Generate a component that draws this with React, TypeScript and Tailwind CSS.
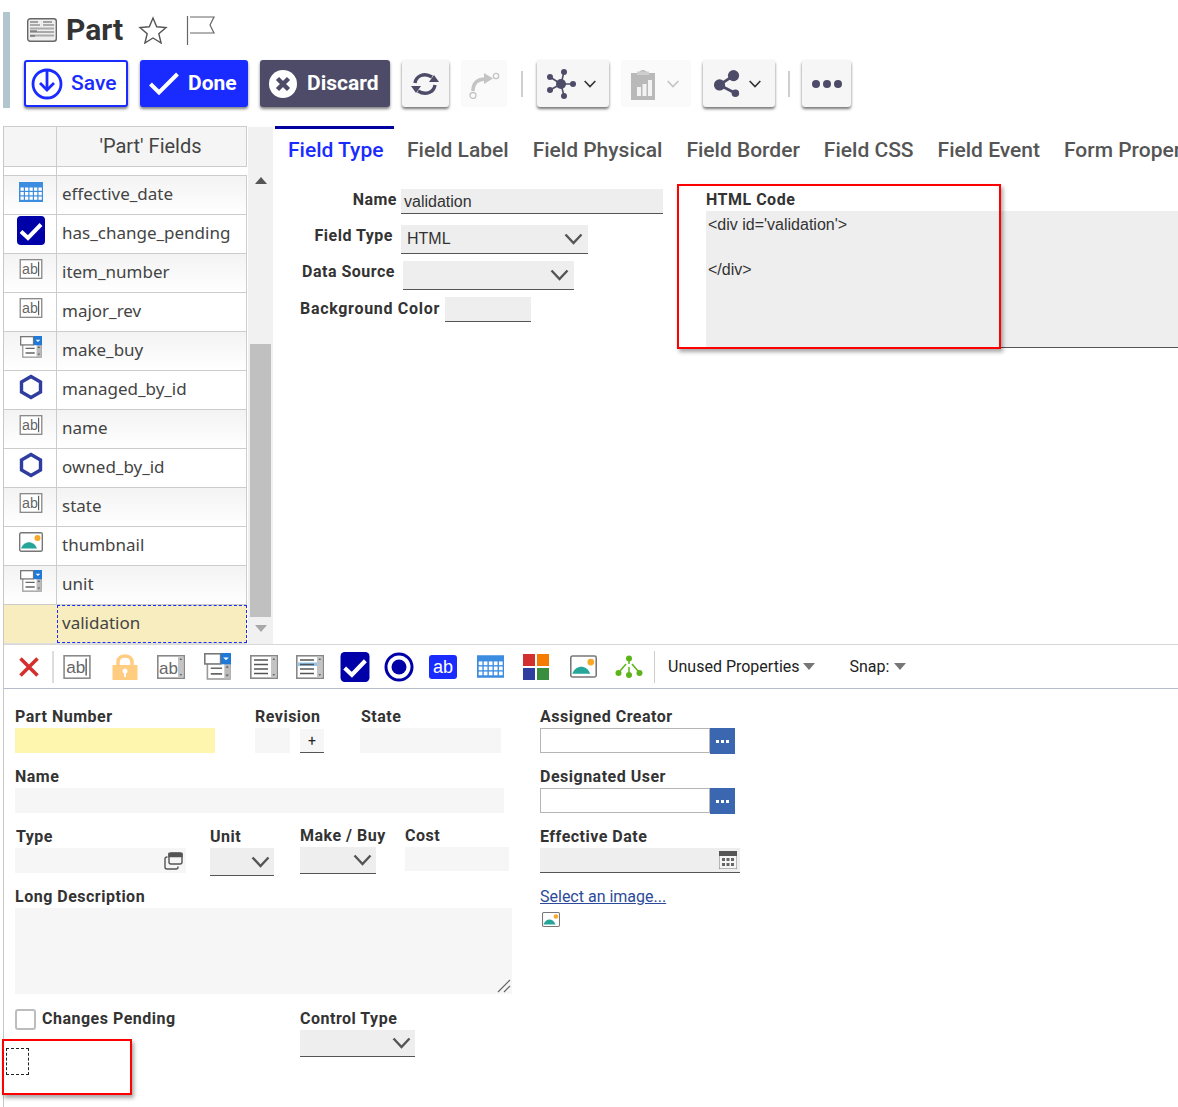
import React from "react";

const Chevron = ({ className = "", color = "#555" }: { className?: string; color?: string }) => (
  <svg viewBox="0 0 18 12" className={className} fill="none" stroke={color} strokeWidth="2.4">
    <path d="M1 1.5 L9 10 L17 1.5" />
  </svg>
);

const Abl = ({ w = 24, h = 20 }: { w?: number; h?: number }) => (
  <svg width={w} height={h} viewBox="0 0 24 21">
    <rect x="0.7" y="0.7" width="22.6" height="19.6" fill="#fff" stroke="#8a8a8a" strokeWidth="1.4" />
    <text x="2.5" y="16" fontSize="15" fill="#666" fontFamily="Liberation Sans">ab</text>
    <path d="M20 3v15" stroke="#555" strokeWidth="1.2" />
  </svg>
);

const Combo = ({ s = 0.92 }: { s?: number }) => (
  <svg width={24 * s} height={24 * s} viewBox="0 0 24 24">
    <rect x="3" y="8" width="20" height="15" fill="#fff" stroke="#999" strokeWidth="1.4" />
    <rect x="18" y="9" width="5" height="14" fill="#bbb" />
    <rect x="0.7" y="0.7" width="14" height="9" fill="#fff" stroke="#777" strokeWidth="1.4" />
    <rect x="15" y="0" width="9" height="10" fill="#1e7ad6" />
    <path d="M17 4h5l-2.500 2.500z" fill="#fff" />
    <path d="M6 13.500h10M6 18.500h10" stroke="#666" strokeWidth="1.400" />
    <path d="M19 13l1.500-2 1.500 2zM19 19l1.500 2 1.500-2z" fill="#666" />
  </svg>
);

const Hex = () => (
  <svg width="24" height="26" viewBox="0 0 24 26" fill="none">
    <path d="M12 2.500 L21.500 8 V18 L12 23.500 L2.500 18 V8 Z" stroke="#2f3d9f" strokeWidth="3.400" />
  </svg>
);

const CalGrid = ({ w = 24, h = 20 }: { w?: number; h?: number }) => (
  <svg width={w} height={h} viewBox="0 0 24 20">
    <rect width="24" height="20" fill="#3c8ce0" />
    <g fill="#fff">
      {[5.5, 10, 14.5].map((y) =>
        [1.5, 6, 10.5, 15, 19.5].map((x) => <rect key={`${x}-${y}`} x={x} y={y} width="3.300" height="3.300" />)
      )}
    </g>
  </svg>
);

const CheckBlue = ({ w = 28, h = 29 }: { w?: number; h?: number }) => (
  <svg width={w} height={h} viewBox="0 0 28 29">
    <rect width="28" height="29" rx="4" fill="#0000a8" />
    <path d="M4 15.500 L11 22 L24 8.500" fill="none" stroke="#fff" strokeWidth="4" />
  </svg>
);

const Pic = ({ w = 24, h = 20 }: { w?: number; h?: number }) => (
  <svg width={w} height={h} viewBox="0 0 24 20">
    <rect x="0.700" y="0.700" width="22.600" height="18.600" rx="1.500" fill="#fff" stroke="#777" strokeWidth="1.400" />
    <path d="M2 16.500 C5 8 15 8 18 16.500 Z" fill="#26a69a" />
    <circle cx="18.500" cy="6" r="3" fill="#f9a825" />
  </svg>
);

const ListBox = ({ hl = false }: { hl?: boolean }) => (
  <svg width="28" height="24" viewBox="0 0 28 24">
    <rect x="0.800" y="0.800" width="26.400" height="22.400" fill="#fff" stroke="#888" strokeWidth="1.600" />
    <rect x="21" y="1.500" width="5.500" height="21" fill="#c4c4c4" />
    {hl && <rect x="2" y="7.500" width="19" height="3.500" fill="#8fc7ef" />}
    <path d="M4 5h14M4 9.500h14M4 14h14M4 18.500h14" stroke="#555" strokeWidth="1.300" />
    <path d="M22.500 5l1.300-2 1.300 2zM22.500 19l1.300 2 1.300-2z" fill="#666" />
  </svg>
);

const rows: { name: string; icon: React.ReactNode; shade: boolean; pad: string }[] = [
  { name: "effective_date", icon: <CalGrid />, shade: true, pad: "pt-[6px]" },
  { name: "has_change_pending", icon: <CheckBlue />, shade: false, pad: "pt-[1px]" },
  { name: "item_number", icon: <Abl />, shade: true, pad: "pt-[5px]" },
  { name: "major_rev", icon: <Abl />, shade: false, pad: "pt-[5px]" },
  { name: "make_buy", icon: <Combo />, shade: true, pad: "pt-[4px]" },
  { name: "managed_by_id", icon: <Hex />, shade: false, pad: "pt-[3px]" },
  { name: "name", icon: <Abl />, shade: true, pad: "pt-[5px]" },
  { name: "owned_by_id", icon: <Hex />, shade: false, pad: "pt-[3px]" },
  { name: "state", icon: <Abl />, shade: true, pad: "pt-[5px]" },
  { name: "thumbnail", icon: <Pic />, shade: false, pad: "pt-[5px]" },
  { name: "unit", icon: <Combo />, shade: true, pad: "pt-[4px]" },
];

const ToolBtn = ({ children, className = "" }: { children: React.ReactNode; className?: string }) => (
  <button className={`h-[47px] flex items-center justify-center rounded-[3px] bg-[#f6f6f6] shadow-[0_2px_3px_rgba(0,0,0,0.55)] ${className}`}>
    {children}
  </button>
);

const Sep = () => <div className="w-[2px] h-[26px] bg-[#cfcfcf]" />;

const Label = ({ children, className = "" }: { children: React.ReactNode; className?: string }) => (
  <div className={`text-[16px] leading-[18px] font-bold text-[#333] tracking-[0.5px] whitespace-nowrap ${className}`}>{children}</div>
);

const Select = ({ className = "" }: { className?: string }) => (
  <div className={`bg-[#eeeeee] border-b border-[#555] flex items-center justify-end ${className}`}>
    <Chevron className="w-[19px] h-[12px]" />
  </div>
);

const Lookup = () => (
  <div className="flex h-[26px] w-[195px]">
    <div className="w-[170px] h-[25px] border border-[#b5b5b5] bg-white" />
    <div className="w-[25px] h-[26px] bg-[#3b67b0] flex items-center justify-center gap-[2px]">
      <span className="w-[3px] h-[3px] bg-white" />
      <span className="w-[3px] h-[3px] bg-white" />
      <span className="w-[3px] h-[3px] bg-white" />
    </div>
  </div>
);

export default function App() {
  return (
    <div className="relative w-[1178px] h-[1107px] overflow-hidden bg-white font-['Roboto',sans-serif] text-[#333]">
      <div className="absolute left-[3px] top-[12px] w-[7px] h-[96px] bg-[#b4c6cd]" />

      {/* Header */}
      <header className="relative h-[126px] pl-[24px]">
        <div className="flex items-center h-[60px] pl-[3px]">
          <svg width="30" height="24" viewBox="0 0 30 24" className="mt-[-1px]">
            <rect x="0.700" y="0.700" width="28.600" height="22.600" rx="2.500" fill="#eee" stroke="#666" strokeWidth="1.400" />
            <path d="M3 4h8M16 4h9" stroke="#555" strokeWidth="1.200" />
            <path d="M3 7h10M16 7h11M3 10.500h24M3 14h24M3 17.500h24" stroke="#aaa" strokeWidth="1.800" />
            <path d="M3 13h7M3 18h5" stroke="#555" strokeWidth="1.200" />
          </svg>
          <h1 className="ml-[9px] text-[30px] leading-none font-bold text-[#333]">Part</h1>
          <svg width="30" height="28" viewBox="0 0 30 28" className="ml-[15px]" fill="none" stroke="#555" strokeWidth="1.400">
            <path d="M15 2 L18.700 10.800 L28 11.500 L20.800 17.700 L23.100 27 L15 22 L6.900 27 L9.200 17.700 L2 11.500 L11.300 10.800 Z" />
          </svg>
          <svg width="30" height="30" viewBox="0 0 30 30" className="ml-[18px] mb-[-2px]" fill="none" stroke="#666" strokeWidth="1.200">
            <path d="M1.500 0V29" />
            <path d="M4 1H28L24 9L28 17H4" />
          </svg>
        </div>
        <div className="flex items-center">
          <button className="w-[104px] h-[47px] rounded-[3px] border-2 border-[#1a2bff] bg-white flex items-center pl-[5px] shadow-[0_2px_3px_rgba(0,0,0,0.5)]">
            <svg width="32" height="32" viewBox="0 0 32 32" fill="none" stroke="#1a2bff" strokeWidth="2.800">
              <circle cx="16" cy="16" r="14" />
              <path d="M16 3V21" />
              <path d="M9 15L16 22L23 15" />
            </svg>
            <span className="ml-[8px] text-[21px] font-medium text-[#1a2bff]">Save</span>
          </button>
          <button className="ml-[12px] w-[108px] h-[47px] rounded-[3px] bg-[#1a2bff] flex items-center pl-[9px] shadow-[0_2px_3px_rgba(0,0,0,0.5)]">
            <svg width="30" height="24" viewBox="0 0 30 24" fill="none" stroke="#fff" strokeWidth="4">
              <path d="M1.500 12L10 20.500L28.500 2" />
            </svg>
            <span className="ml-[9px] text-[21px] font-bold text-white">Done</span>
          </button>
          <button className="ml-[12px] w-[130px] h-[47px] rounded-[3px] bg-[#4d4b68] flex items-center pl-[9px] shadow-[0_2px_3px_rgba(0,0,0,0.5)]">
            <svg width="28" height="28" viewBox="0 0 28 28">
              <circle cx="14" cy="14" r="14" fill="#fff" />
              <path d="M8.500 8.500L19.500 19.500M19.500 8.500L8.500 19.500" stroke="#4d4b68" strokeWidth="4.500" />
            </svg>
            <span className="ml-[10px] text-[21px] font-bold text-white whitespace-nowrap">Discard</span>
          </button>
          <ToolBtn className="ml-[12px] w-[47px] pr-[2px]">
            <svg width="30" height="30" viewBox="0 0 30 30" fill="none" stroke="#4d4b68" strokeWidth="3.400">
              <path d="M5 14C6 7 14 3 22 8" />
              <path d="M25 16C24 23 16 27 8 22" />
              <path d="M19 13H29L24 6Z" fill="#4d4b68" stroke="none" />
              <path d="M1 17H11L6 24Z" fill="#4d4b68" stroke="none" />
            </svg>
          </ToolBtn>
          <div className="ml-[12px] w-[46px] h-[47px] bg-[#fafafa] rounded-[3px] flex items-center justify-center">
            <svg width="32" height="30" viewBox="0 0 32 30" fill="none" stroke="#c4c4c4">
              <path d="M5 22C5 14 9 10 18 10" strokeWidth="3.500" />
              <path d="M16 4L25 9.500L16 15Z" fill="#c4c4c4" stroke="none" />
              <circle cx="28" cy="7" r="2.700" strokeWidth="1.300" />
              <circle cx="5" cy="26.500" r="3" strokeWidth="1.300" />
            </svg>
          </div>
          <div className="ml-[14px]"><Sep /></div>
          <ToolBtn className="ml-[14px] w-[72px] pr-[5px]">
            <svg width="32" height="32" viewBox="0 0 32 32" fill="#4d4b68" stroke="#4d4b68">
              <path d="M16 16L5 9M16 16L19 4M16 16L28 16M16 16L19 28M16 16L5 22" strokeWidth="1.600" />
              <circle cx="16" cy="16" r="5" stroke="none" />
              <circle cx="5" cy="9" r="3" stroke="none" />
              <circle cx="19" cy="4" r="3" stroke="none" />
              <circle cx="28" cy="16" r="3" stroke="none" />
              <circle cx="19" cy="28" r="3" stroke="none" />
              <circle cx="5" cy="22" r="3" stroke="none" />
            </svg>
            <Chevron className="w-[12px] h-[8px] ml-[7px]" color="#333" />
          </ToolBtn>
          <div className="ml-[12px] w-[70px] h-[47px] bg-[#fafafa] rounded-[3px] flex items-center justify-center pr-[3px]">
            <svg width="26" height="32" viewBox="0 0 26 32">
              <path d="M1 5H9C10 1 16 1 17 5H25V32H1Z" fill="#b9b9b9" />
              <path d="M7 3.500H19V7H7Z" fill="#cfcfcf" />
              <path d="M7 19h4v9H7zM12.500 16h4v12h-4zM18 12h4v16h-4z" fill="#f3f3f3" />
            </svg>
            <Chevron className="w-[12px] h-[8px] ml-[11px]" color="#c4c4c4" />
          </div>
          <ToolBtn className="ml-[12px] w-[72px] pr-[5px]">
            <svg width="28" height="32" viewBox="0 0 30 32" fill="#4d4b68" stroke="#4d4b68">
              <path d="M7 17L22 7M7 17L24 26" strokeWidth="3" />
              <circle cx="7" cy="17" r="6" stroke="none" />
              <circle cx="22" cy="7" r="6" stroke="none" />
              <circle cx="24" cy="26" r="4" stroke="none" />
            </svg>
            <Chevron className="w-[12px] h-[8px] ml-[8px]" color="#333" />
          </ToolBtn>
          <div className="ml-[13px]"><Sep /></div>
          <ToolBtn className="ml-[12px] w-[49px]">
            <div className="flex gap-[3px]">
              <span className="w-[8px] h-[8px] rounded-full bg-[#4d4b68]" />
              <span className="w-[8px] h-[8px] rounded-full bg-[#4d4b68]" />
              <span className="w-[8px] h-[8px] rounded-full bg-[#4d4b68]" />
            </div>
          </ToolBtn>
        </div>
      </header>

      <div className="ml-[3px] border-l border-[#c8c8c8] h-[981px]">
        {/* Main */}
        <section className="flex h-[518px]">
          <div className="w-[270px] flex shrink-0">
            <div className="w-[243px] shrink-0 font-['Noto_Sans',sans-serif] text-[17px] text-[#444]">
              <div className="flex h-[41px] border-y border-[#ccc] bg-[#f5f5f5] border-r">
                <div className="w-[53px] border-r border-[#ccc]" />
                <div className="flex-1 flex items-center justify-center font-['Roboto',sans-serif] text-[20px] pr-[2px] pb-[1px]">'Part' Fields</div>
              </div>
              <div className="h-[8px] ml-[52px] w-[1px] bg-[#ccc]" />
              {rows.map((r) => (
                <div
                  key={r.name}
                  className={`flex h-[39px] border-t border-[#ccc] border-r ${r.shade ? "bg-linear-to-b from-[#f3f3f3] to-white" : "bg-white"}`}
                >
                  <div className={`w-[53px] shrink-0 border-r border-[#ccc] flex justify-center items-start pl-[2px] ${r.pad}`}>{r.icon}</div>
                  <div className="pl-[5px] pb-[3px] flex items-center leading-none">{r.name}</div>
                </div>
              ))}
              <div className="flex h-[39px] border-t border-[#ccc] bg-[#f8edbf]">
                <div className="w-[53px] shrink-0" />
                <div className="flex-1 border border-dashed border-[#1a2bff] pl-[4px] pb-[3px] flex items-center leading-none">validation</div>
              </div>
              <div className="h-[1px] bg-[#ddd]" />
            </div>
            <div className="ml-[1px] w-[25px] h-[518px] bg-[#f1f1f1] border-t border-white flex flex-col items-center">
              <div className="mt-[50px] w-0 h-0 border-x-[6px] border-x-transparent border-b-[7px] border-b-[#555]" />
              <div className="mt-[160px] w-[21px] h-[273px] bg-[#c0c0c0]" />
              <div className="mt-[8px] w-0 h-0 border-x-[6px] border-x-transparent border-t-[7px] border-t-[#a8a8a8]" />
            </div>
          </div>
          <div className="flex-1 min-w-0 ml-[1px]">
            <div className="flex items-start h-[58px] text-[21px] font-medium text-[#555] whitespace-nowrap overflow-hidden">
              <div className="shrink-0 w-[119px] h-[45px] border-t-[3px] border-[#00009f] pl-[13px] pt-[6px] text-[#1a2bff]">Field Type</div>
              <div className="shrink-0 pl-[13px] pt-[9px]">Field Label</div>
              <div className="shrink-0 pl-[24px] pt-[9px]">Field Physical</div>
              <div className="shrink-0 pl-[24px] pt-[9px]">Field Border</div>
              <div className="shrink-0 pl-[24px] pt-[9px]">Field CSS</div>
              <div className="shrink-0 pl-[24px] pt-[9px]">Field Event</div>
              <div className="shrink-0 pl-[24px] pt-[9px]">Form Properties</div>
            </div>
            <div className="flex">
              <div className="w-[388px] shrink-0 pt-[5px]">
                <div className="flex h-[25px]">
                  <Label className="w-[122px] text-right pt-[2px]">Name</Label>
                  <div className="ml-[4px] w-[262px] h-[25px] bg-[#eeeeee] border-b border-[#555] pl-[3px] pt-[1px] font-['Liberation_Sans',sans-serif] text-[16px] leading-[24px] text-[#333]">validation</div>
                </div>
                <div className="flex mt-[11px] h-[29px]">
                  <Label className="w-[118px] text-right pt-[2px]">Field Type</Label>
                  <div className="ml-[8px] w-[187px] h-[29px] bg-[#eeeeee] border-b border-[#555] flex items-center justify-between pl-[6px] pr-[5px] font-['Liberation_Sans',sans-serif] text-[16px]">
                    HTML
                    <Chevron className="w-[19px] h-[12px]" />
                  </div>
                </div>
                <div className="flex mt-[7px] h-[29px]">
                  <Label className="w-[120px] text-right pt-[2px]">Data Source</Label>
                  <Select className="ml-[8px] w-[171px] h-[29px] pr-[5px]" />
                </div>
                <div className="flex mt-[7px] h-[25px]">
                  <Label className="w-[165px] text-right pt-[3px] tracking-[0.7px]">Background Color</Label>
                  <div className="ml-[5px] w-[86px] h-[25px] bg-[#eeeeee] border-b border-[#555]" />
                </div>
              </div>
              <div className="flex-1 min-w-0 ml-[43px] pt-[5px]">
                <Label className="leading-[22px]">HTML Code</Label>
                <div className="h-[137px] bg-[#eeeeee] border-b border-[#555] pl-[2px] pt-[3px] font-['Liberation_Sans',sans-serif] text-[16px] leading-[22.500px] text-[#333] whitespace-pre">
                  {"<div id='validation'>\n\n</div>"}
                </div>
              </div>
            </div>
          </div>
        </section>

        {/* Palette */}
        <section className="flex items-center h-[45px] border-t border-b border-t-[#d8d8d8] border-b-[#b6bccb] whitespace-nowrap">
          <svg width="20" height="20" viewBox="0 0 20 20" className="ml-[15px]" stroke="#d32f2f" strokeWidth="3.600">
            <path d="M1.500 1.500L18.500 18.500M18.500 1.500L1.500 18.500" />
          </svg>
          <div className="ml-[13px] w-[2px] h-[32px] bg-[#ddd]" />
          <div className="ml-[9px] flex"><Abl w={28} h={24} /></div>
          <svg width="26" height="26" viewBox="0 0 26 26" className="ml-[21px]">
            <path d="M6 12V8C6 0 20 0 20 8V12" fill="none" stroke="#ffcc80" strokeWidth="3.500" />
            <rect x="0.500" y="11" width="25" height="15" fill="#ffcc80" />
            <circle cx="13" cy="17" r="2.500" fill="#fff" />
            <rect x="12" y="17" width="2" height="6" fill="#fff" />
          </svg>
          <svg width="28" height="24" viewBox="0 0 28 24" className="ml-[19px]">
            <rect x="0.800" y="0.800" width="26.400" height="22.400" fill="#fff" stroke="#888" strokeWidth="1.600" />
            <rect x="21" y="1.500" width="5.500" height="21" fill="#c4c4c4" />
            <text x="2" y="18.500" fontSize="17" fill="#666" fontFamily="Liberation Sans">ab</text>
            <path d="M22.500 5l1.300-2 1.300 2zM22.500 19l1.300 2 1.300-2z" fill="#666" />
          </svg>
          <div className="ml-[19px] flex"><Combo s={1.13} /></div>
          <div className="ml-[19px] flex"><ListBox /></div>
          <div className="ml-[18px] flex"><ListBox hl /></div>
          <div className="ml-[16px] flex"><CheckBlue w={30} h={30} /></div>
          <svg width="30" height="30" viewBox="0 0 30 30" className="ml-[14px]">
            <circle cx="15" cy="15" r="13" fill="#fff" stroke="#0000a8" strokeWidth="3" />
            <circle cx="15" cy="15" r="7.500" fill="#0000a8" />
          </svg>
          <div className="ml-[15px] w-[28px] h-[24px] rounded-[3px] bg-[#1a2bff] text-white text-[18px] leading-[24px] text-center font-['Liberation_Sans',sans-serif]">ab</div>
          <div className="ml-[20px] flex"><CalGrid w={27} h={23} /></div>
          <div className="ml-[19px] grid grid-cols-2 gap-[2px]">
            <span className="w-[12px] h-[12px] bg-[#d32f2f]" />
            <span className="w-[12px] h-[12px] bg-[#f57c00]" />
            <span className="w-[12px] h-[12px] bg-[#303f9f]" />
            <span className="w-[12px] h-[12px] bg-[#388e3c]" />
          </div>
          <div className="ml-[21px] flex"><Pic w={27} h={23} /></div>
          <svg width="28" height="24" viewBox="0 0 28 24" className="ml-[18px]" fill="#5cb518" stroke="#5cb518">
            <path d="M14 4V9M11 9L5 16M17 9L23 16M14 12V17" strokeWidth="1.500" fill="none" />
            <circle cx="14" cy="3.500" r="3" stroke="none" />
            <circle cx="3.500" cy="18" r="3" stroke="none" />
            <circle cx="14" cy="20" r="3" stroke="none" />
            <circle cx="24.500" cy="18" r="3" stroke="none" />
          </svg>
          <div className="ml-[11px] w-[1px] h-[32px] bg-[#ccc]" />
          <span className="ml-[13px] text-[16px] text-[#222]">Unused Properties</span>
          <span className="ml-[3px] w-0 h-0 border-x-[6px] border-x-transparent border-t-[7px] border-t-[#777]" />
          <span className="ml-[35px] text-[16px] text-[#222]">Snap:</span>
          <span className="ml-[5px] w-0 h-0 border-x-[6px] border-x-transparent border-t-[7px] border-t-[#777]" />
        </section>

        {/* Form */}
        <section className="flex pl-[11px] pt-[19px]">
          <div className="w-[525px] shrink-0">
            <div className="flex">
              <div className="w-[240px]">
                <Label>Part Number</Label>
                <div className="mt-[2px] w-[200px] h-[25px] bg-[#fef6ae]" />
              </div>
              <div className="w-[105px]">
                <Label>Revision</Label>
                <div className="mt-[2px] flex items-end">
                  <div className="w-[35px] h-[25px] bg-[#f6f6f6]" />
                  <div className="ml-[10px] w-[24px] h-[24px] bg-[#f6f6f6] border-b border-[#555] text-center text-[14px] leading-[24px] text-[#222]">+</div>
                </div>
              </div>
              <div>
                <Label className="pl-[1px]">State</Label>
                <div className="mt-[2px] w-[141px] h-[25px] bg-[#f6f6f6]" />
              </div>
            </div>
            <Label className="mt-[15px]">Name</Label>
            <div className="mt-[2px] w-[489px] h-[25px] bg-[#f6f6f6]" />
            <div className="flex mt-[14px]">
              <div className="w-[195px]">
                <Label className="pl-[1px] mt-[1px]">Type</Label>
                <div className="mt-[2px] w-[171px] h-[25px] bg-[#f6f6f6] flex items-center justify-end pr-[3px]">
                  <svg width="19" height="18" viewBox="0 0 19 18" fill="none" stroke="#555" strokeWidth="1.400">
                    <rect x="5" y="1" width="13" height="11" rx="2" fill="#f6f6f6" />
                    <path d="M5 1.500h13v3H5z" fill="#555" />
                    <path d="M3.500 5H3a2 2 0 0 0-2 2v8a2 2 0 0 0 2 2h9a2 2 0 0 0 2-2v-.5" />
                  </svg>
                </div>
              </div>
              <div className="w-[90px]">
                <Label className="mt-[1px]">Unit</Label>
                <Select className="mt-[2px] w-[64px] h-[28px] pr-[4px]" />
              </div>
              <div className="w-[105px]">
                <Label>Make / Buy</Label>
                <Select className="mt-[2px] w-[76px] h-[27px] pr-[4px]" />
              </div>
              <div>
                <Label>Cost</Label>
                <div className="mt-[2px] w-[104px] h-[24px] bg-[#f6f6f6]" />
              </div>
            </div>
            <Label className="mt-[12px]">Long Description</Label>
            <div className="mt-[2px] w-[497px] h-[86px] bg-[#f6f6f6] flex items-end justify-end">
              <svg width="14" height="14" viewBox="0 0 14 14" stroke="#666" strokeWidth="1.200" className="mb-[1px] mr-[1px]">
                <path d="M1 13L13 1M7 13L13 7" />
              </svg>
            </div>
            <div className="flex mt-[15px]">
              <div className="w-[285px] flex items-center h-[21px]">
                <span className="w-[21px] h-[21px] rounded-[3px] border-2 border-[#bdbdbd] bg-white" />
                <Label className="ml-[6px] mb-[2px]">Changes Pending</Label>
              </div>
              <div>
                <Label className="mt-[1px]">Control Type</Label>
                <Select className="mt-[2px] w-[115px] h-[27px] pr-[4px]" />
              </div>
            </div>
          </div>
          <div className="w-[200px]">
            <Label>Assigned Creator</Label>
            <div className="mt-[2px]"><Lookup /></div>
            <Label className="mt-[14px]">Designated User</Label>
            <div className="mt-[2px]"><Lookup /></div>
            <Label className="mt-[14px]">Effective Date</Label>
            <div className="mt-[2px] h-[25px] bg-[#eeeeee] border-b border-[#555] flex items-center justify-end pr-[3px]">
              <svg width="18" height="18" viewBox="0 0 18 18">
                <rect width="18" height="18" fill="#f5f5f5" stroke="#777" />
                <rect width="18" height="5" fill="#555" />
                <g fill="#666">
                  <rect x="3" y="7" width="3" height="3" /><rect x="7.500" y="7" width="3" height="3" /><rect x="12" y="7" width="3" height="3" />
                  <rect x="3" y="12" width="3" height="3" /><rect x="7.500" y="12" width="3" height="3" /><rect x="12" y="12" width="3" height="3" />
                </g>
              </svg>
            </div>
            <a className="block mt-[15px] text-[16px] leading-[18px] text-[#2c4a9a] underline whitespace-nowrap">Select an image...</a>
            <div className="mt-[6px] ml-[2px] flex"><Pic w={18} h={15} /></div>
          </div>
        </section>
      </div>

      {/* Annotation boxes */}
      <div className="absolute left-[677px] top-[184px] w-[324px] h-[165px] border-2 border-[#f00] shadow-[2px_3px_4px_rgba(0,0,0,0.35)]" />
      <div className="absolute left-[2px] top-[1039px] w-[130px] h-[56px] border-2 border-[#f00] shadow-[2px_3px_4px_rgba(0,0,0,0.35)]" />
      <div className="absolute left-[6px] top-[1048px] w-[23px] h-[27px] border border-dashed border-[#222]" />
    </div>
  );
}
